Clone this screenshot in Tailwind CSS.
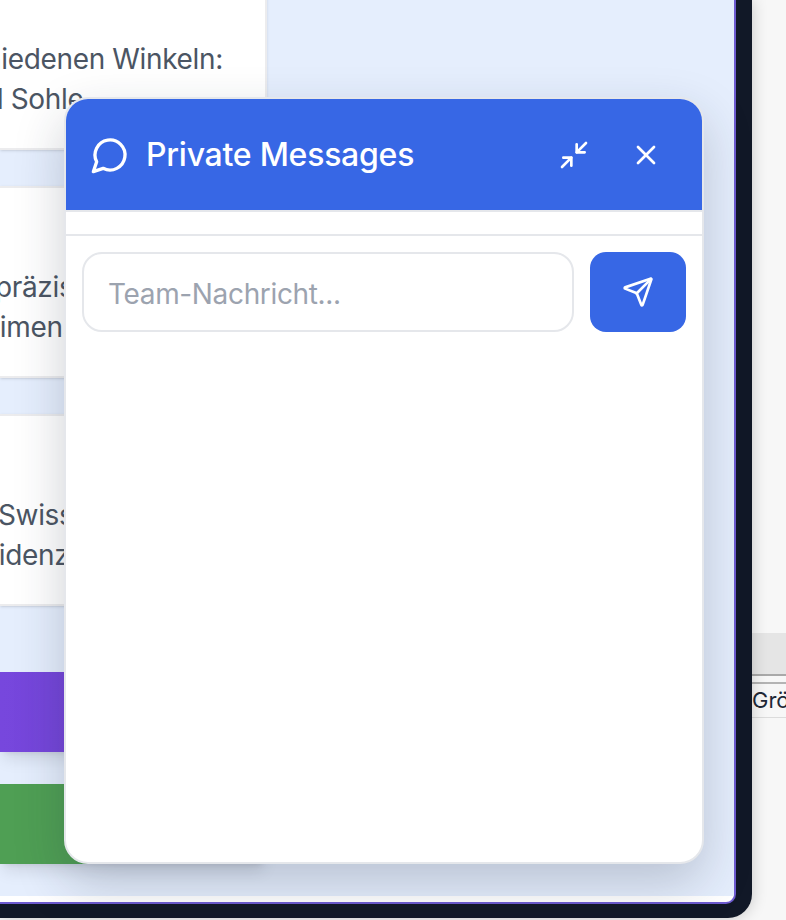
<!DOCTYPE html>
<html lang="de">
<head>
    <meta charset="UTF-8">
    <meta name="viewport" content="width=device-width, initial-scale=1.0">
    <script src="https://cdn.jsdelivr.net/npm/@tailwindcss/browser@4"></script>
    <title>Private Messages</title>
</head>
<body class="relative flex w-[786px] h-[920px] overflow-hidden bg-[#f7f7f7] font-['Inter',sans-serif]">

    <!-- Window frame -->
    <div class="relative z-10 w-[752px] h-[918px] shrink-0 bg-[#111827] rounded-br-[24px] shadow-[0_0_16px_rgba(0,0,0,0.2)]">
        <div class="w-[736px] h-[904px] bg-white border-r-2 border-b-2 border-[#6d5bd0] rounded-br-[10px] overflow-hidden">
            <div class="w-full h-[896px] bg-[#e5eefd] overflow-hidden">

                <!-- Cards behind the chat -->
                <div class="flex flex-col gap-[36px] w-[267px] mt-[-42px]">
                    <div class="h-[192px] flex flex-col justify-end pb-[29px] bg-white border-2 border-l-0 border-[#ececee] shadow-sm text-[28px] leading-[40px] tracking-[-0.35px] text-[#4b5563] whitespace-nowrap overflow-hidden">
                        <p class="ml-[-86px]">verschiedenen Winkeln:</p>
                        <p class="ml-[-46px]">und Sohle</p>
                    </div>
                    <div class="h-[192px] flex flex-col justify-end pb-[29px] bg-white border-2 border-l-0 border-[#ececee] shadow-sm text-[28px] leading-[40px] tracking-[-0.35px] text-[#4b5563] whitespace-nowrap overflow-hidden">
                        <p class="ml-[-5px]">präzise Messung der</p>
                        <p class="ml-[-20px]">Dimensionen</p>
                    </div>
                    <div class="h-[192px] flex flex-col justify-end pb-[29px] bg-white border-2 border-l-0 border-[#ececee] shadow-sm text-[28px] leading-[40px] tracking-[-0.35px] text-[#4b5563] whitespace-nowrap overflow-hidden">
                        <p class="ml-[-2px]">Swiss Made</p>
                        <p class="ml-[-33px]">Evidenz</p>
                    </div>
                </div>

                <div class="w-[266px] h-[80px] mt-[66px] bg-gradient-to-r from-[#7747dd] to-[#6d41d2] shadow-lg"></div>
                <div class="w-[266px] h-[80px] mt-[32px] bg-[#4f9f54] shadow-lg"></div>
            </div>
        </div>
    </div>

    <!-- Table sliver on the right -->
    <div class="flex-1 pt-[633px] text-[22px] leading-[33px] text-[#1f2937] overflow-hidden whitespace-nowrap">
        <div class="h-[41px] bg-[#e5e5e5] border-b-2 border-[#a9a9a9] box-content"></div>
        <div class="h-[6px] border-b-2 border-[#b4b4b4] box-content"></div>
        <div class="h-[33px] border-b border-[#dcdcdc] box-content">Größe</div>
    </div>

    <!-- Chat panel -->
    <div class="absolute z-20 left-[64px] top-[97px] w-[640px] h-[767px] flex flex-col bg-white border-2 border-[#e5e7eb] rounded-[24px] overflow-hidden shadow-[0_20px_50px_rgba(30,41,59,0.22)]">
        <div class="flex items-center justify-between h-[111px] shrink-0 pl-6 pr-8 bg-[#3767e5] text-white">
            <div class="flex items-center gap-4">
                <svg class="w-10 h-10" fill="none" stroke="currentColor" stroke-width="2" stroke-linecap="round" stroke-linejoin="round" viewBox="0 0 24 24">
                    <path d="M7.9 20A9 9 0 1 0 4 16.1L2 22Z" />
                </svg>
                <h2 class="mt-px text-[32px] leading-[48px] font-medium tracking-[-0.25px]">Private Messages</h2>
            </div>
            <div class="flex items-center gap-6">
                <button class="p-2">
                    <svg class="w-8 h-8" fill="none" stroke="currentColor" stroke-width="2" stroke-linecap="round" stroke-linejoin="round" viewBox="0 0 24 24">
                        <path d="m14 10 7-7" /><path d="M20 10h-6V4" /><path d="m3 21 7-7" /><path d="M4 14h6v6" />
                    </svg>
                </button>
                <button class="p-2">
                    <svg class="w-8 h-8" fill="none" stroke="currentColor" stroke-width="2" stroke-linecap="round" stroke-linejoin="round" viewBox="0 0 24 24">
                        <path d="M18 6 6 18" /><path d="m6 6 12 12" />
                    </svg>
                </button>
            </div>
        </div>

        <div class="h-[26px] shrink-0 border-y-2 border-[#e5e7eb]"></div>

        <div class="flex gap-4 p-4">
            <input type="text" placeholder="Team-Nachricht..." class="flex-1 min-w-0 h-[80px] px-6 pt-[3px] text-[28px] tracking-[-0.35px] border-2 border-[#e5e7eb] rounded-[20px] placeholder:text-[#9ca3af]">
            <button class="flex items-center justify-center w-[96px] h-[80px] bg-[#3767e5] text-white rounded-[16px]">
                <svg class="w-8 h-8" fill="none" stroke="currentColor" stroke-width="2" stroke-linecap="round" stroke-linejoin="round" viewBox="0 0 24 24">
                    <path d="M14.536 21.686a.5.5 0 0 0 .937-.024l6.5-19a.496.496 0 0 0-.635-.635l-19 6.5a.5.5 0 0 0-.024.937l7.93 3.18a2 2 0 0 1 1.112 1.11z" />
                    <path d="m21.854 2.147-10.94 10.939" />
                </svg>
            </button>
        </div>
    </div>
</body>
</html>
